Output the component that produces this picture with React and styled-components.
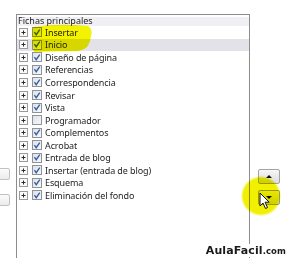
import React from 'react'
import styled, { createGlobalStyle } from 'styled-components'

const Global = createGlobalStyle`
  html, body { margin: 0; padding: 0; background: #fff; }
`

const tabs = [
  { label: 'Insertar', checked: true },
  { label: 'Inicio', checked: true, selected: true },
  { label: 'Diseño de página', checked: true },
  { label: 'Referencias', checked: true },
  { label: 'Correspondencia', checked: true },
  { label: 'Revisar', checked: true },
  { label: 'Vista', checked: true },
  { label: 'Programador', checked: false },
  { label: 'Complementos', checked: true },
  { label: 'Acrobat', checked: true },
  { label: 'Entrada de blog', checked: true },
  { label: 'Insertar (entrada de blog)', checked: true },
  { label: 'Esquema', checked: true },
  { label: 'Eliminación del fondo', checked: true },
]

const Expander = () => (
  <PlusBox>
    <svg width="7" height="7" viewBox="0 0 7 7">
      <path d="M1.5 3.5h4M3.5 1.5v4" stroke="#2b2b2b" strokeWidth="1" />
    </svg>
  </PlusBox>
)

const Check = ({ checked }) => (
  <CheckBox>
    {checked && (
      <svg width="9" height="9" viewBox="0 0 9 9">
        <path d="M1.6 4.2 L3.6 7 L7.6 1.2" fill="none" stroke="#3a5ea6" strokeWidth="1.5" />
      </svg>
    )}
  </CheckBox>
)

export default function App() {
  return (
    <>
      <Global />
      <Page>
        <SideButtons>
          <SideButton />
          <SideButton />
        </SideButtons>

        <ListBox>
          <Header>Fichas principales</Header>
          {tabs.map((t) => (
            <Row key={t.label} $selected={t.selected}>
              <Expander />
              <Check checked={t.checked} />
              <Label>{t.label}</Label>
            </Row>
          ))}
          <Marker width="64" height="32" viewBox="0 0 64 32">
            <path
              d="M3 4 Q 28 0 58 3 Q 63 6 61 13 Q 60 20 57 24 Q 52 29 40 28 L 4 29 Q 1 18 3 4 Z"
              fill="#f3f300"
            />
          </Marker>
        </ListBox>

        <Arrows>
          <ArrowButton>
            <Triangle $up />
          </ArrowButton>
          <ArrowButton>
            <Triangle />
          </ArrowButton>
        </Arrows>

        <Spot />
        <Pointer width="12" height="18" viewBox="0 0 12 18">
          <path
            d="M1 1 L1 14 L4 11 L6.5 16.5 L8.5 15.6 L6.1 10.2 L10.2 10.2 Z"
            fill="#fff"
            stroke="#111"
            strokeWidth="1"
            strokeLinejoin="round"
          />
        </Pointer>

        <Logo>
          AulaFacil<Dot>.com</Dot>
        </Logo>
      </Page>
    </>
  )
}

const Page = styled.div`
  position: relative;
  width: 286px;
  height: 258px;
  overflow: hidden;
  background: #fff;
  display: flex;
  font-family: 'Noto Sans', 'DejaVu Sans', sans-serif;
`

const SideButtons = styled.div`
  width: 16px;
  flex-shrink: 0;
  display: flex;
  flex-direction: column;
  gap: 14px;
  padding-top: 168px;
  box-sizing: border-box;
`

const SideButton = styled.div`
  width: 18px;
  height: 10px;
  margin-left: -10px;
  border: 1px solid #c2c2c2;
  border-radius: 2px;
  background: linear-gradient(#fbfbfb, #ececec);
`

const ListBox = styled.div`
  position: relative;
  flex-shrink: 0;
  margin-top: 14px;
  width: 234px;
  height: 260px;
  box-sizing: border-box;
  border: 1px solid #8d8d8d;
  border-bottom: none;
`

const Header = styled.div`
  height: 11px;
  line-height: 11px;
  padding-left: 1px;
  font-size: 9px;
  color: #1e1e1e;
  background: linear-gradient(#fff 0, #fff 2px, #f0f0f4 2px);
`

const Row = styled.div`
  height: 12.55px;
  display: flex;
  align-items: center;
  padding-left: 2px;
  background: ${(p) => (p.$selected ? '#e2e2e8' : 'transparent')};
`

const PlusBox = styled.span`
  width: 7px;
  height: 7px;
  border: 1px solid #9a9a9a;
  background: #fafafa;
  display: flex;
  align-items: center;
  justify-content: center;
  margin-right: 4px;
  flex-shrink: 0;
  & svg {
    display: block;
  }
`

const CheckBox = styled.span`
  width: 8px;
  height: 8px;
  border: 1px solid #8f9296;
  background: linear-gradient(135deg, #dde3ea, #f6f7f9);
  display: flex;
  align-items: center;
  justify-content: center;
  margin-right: 3px;
  flex-shrink: 0;
  & svg {
    display: block;
  }
`

const Label = styled.span`
  font-size: 9px;
  line-height: 11px;
  letter-spacing: -0.1px;
  color: #1e1e1e;
  white-space: nowrap;
`

const Marker = styled.svg`
  position: absolute;
  left: 13px;
  top: 8px;
  mix-blend-mode: multiply;
  pointer-events: none;
`

const Arrows = styled.div`
  display: flex;
  flex-direction: column;
  gap: 6px;
  padding-top: 169px;
  padding-left: 8px;
`

const ArrowButton = styled.div`
  width: 20px;
  height: 13px;
  border: 1px solid #a3a3a3;
  border-radius: 2px;
  background: linear-gradient(#f7f7f7, #dcdcdc);
  display: flex;
  align-items: center;
  justify-content: center;
`

const Triangle = styled.span`
  width: 0;
  height: 0;
  border-left: 3px solid transparent;
  border-right: 3px solid transparent;
  ${(p) => (p.$up ? 'border-bottom: 3px solid #111;' : 'border-top: 3px solid #111;')}
`

const Spot = styled.div`
  position: absolute;
  left: 241px;
  top: 176px;
  width: 40px;
  height: 40px;
  border-radius: 50%;
  background: radial-gradient(circle, #f0f000 0, #f0f000 62%, rgba(240, 240, 0, 0) 72%);
  mix-blend-mode: multiply;
`

const Pointer = styled.svg`
  position: absolute;
  left: 259px;
  top: 192px;
`

const Logo = styled.div`
  position: absolute;
  right: 0;
  bottom: 1px;
  padding: 1px 0 0 3px;
  background: #fff;
  font-family: 'DejaVu Sans', Verdana, sans-serif;
  font-weight: 700;
  font-size: 11px;
  line-height: 11px;
  color: #1a1a1a;
  letter-spacing: 0.1px;
`

const Dot = styled.span`
  font-size: 8.5px;
`
